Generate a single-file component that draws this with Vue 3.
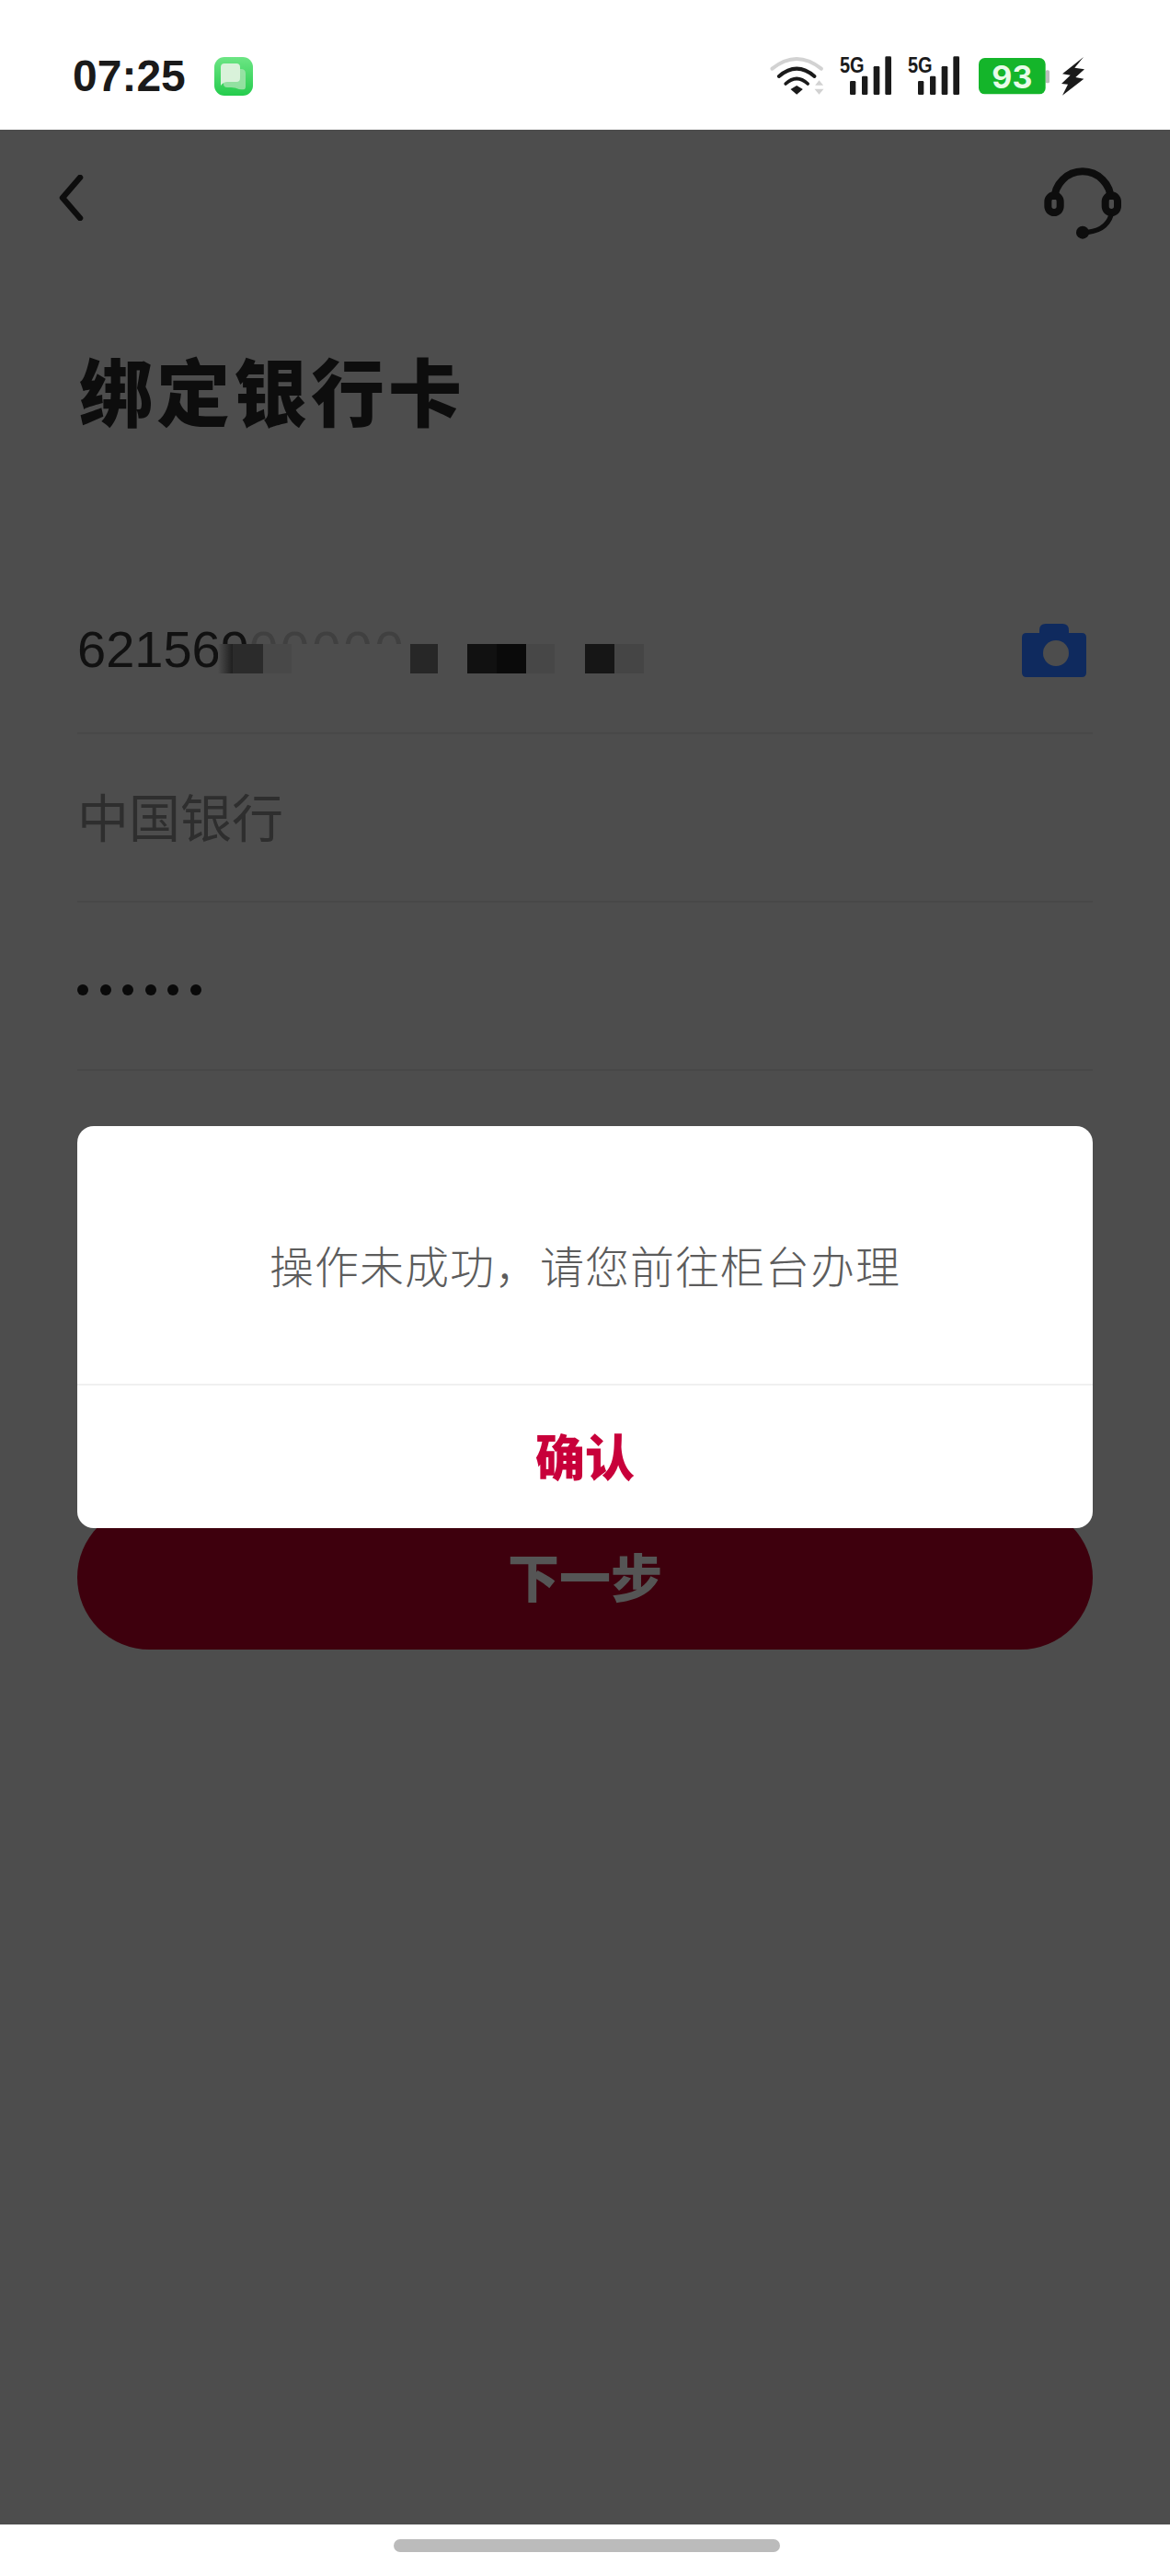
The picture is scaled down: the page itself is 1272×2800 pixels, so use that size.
<script setup>
const mosaic = [
  { w: 16, c: 'linear-gradient(90deg,#4d4d4d,#1f1f1f)' },
  { w: 33, c: '#2b2b2b' },
  { w: 31, c: '#484848' },
  { w: 129, c: '#4d4d4d' },
  { w: 30, c: '#272727' },
  { w: 32, c: '#4d4d4d' },
  { w: 32, c: '#111111' },
  { w: 32, c: '#0a0a0a' },
  { w: 31, c: '#474747' },
  { w: 33, c: '#4d4d4d' },
  { w: 32, c: '#161616' },
  { w: 32, c: '#454545' }
]
const dots = [1, 2, 3, 4, 5, 6]
const signals = [0, 1]
</script>

<template>
  <div class="page">
    <header class="status">
      <div class="status-left">
        <span class="time">07:25</span>
        <svg class="app-icon" width="42" height="42" viewBox="0 0 42 42">
          <defs>
            <linearGradient id="msg" x1="0" y1="0" x2="0" y2="1">
              <stop offset="0" stop-color="#6ce584" />
              <stop offset="1" stop-color="#25cc4d" />
            </linearGradient>
          </defs>
          <rect width="42" height="42" rx="11" fill="url(#msg)" />
          <path d="M19 13h10q5 0 5 5v14q0 2-1 3-5 1-9-1-3-1-6-1h-4q-4 0-4-4V18q0-5 5-5z" fill="#a2e3ad" opacity=".85" />
          <path d="M11 7h13q4 0 4 4v12q0 4-4 4H14q-4 0-7 4V11q0-4 4-4z" fill="#d9f2da" />
        </svg>
      </div>
      <div class="status-right">
        <svg class="wifi" width="62" height="45" viewBox="170 118 185 135">
          <path d="M180 162Q260 98 340 162" fill="none" stroke="#d2d2d2" stroke-width="12" stroke-linecap="round" />
          <path d="M202 187Q260 137 318 187" fill="none" stroke="#1a1a1a" stroke-width="12" stroke-linecap="round" />
          <path d="M224 211Q260 178 296 211" fill="none" stroke="#1a1a1a" stroke-width="11" stroke-linecap="round" />
          <path d="M240 229L260 217L280 229L260 246Z" fill="#1a1a1a" />
          <path d="M320 216L333 200L347 216Z M318 228H348L333 246Z" fill="#d2d2d2" />
        </svg>
        <svg v-for="s in signals" :key="s" class="signal" width="56" height="52" viewBox="0 -30 168 156">
          <text x="0" y="54" font-family="Liberation Sans" font-weight="700" font-size="74" textLength="80" lengthAdjust="spacingAndGlyphs" fill="#1a1a1a">5G</text>
          <rect x="33" y="81" width="19" height="45" rx="4" fill="#1a1a1a" />
          <rect x="72" y="65" width="19" height="61" rx="4" fill="#1a1a1a" />
          <rect x="110" y="33" width="20" height="93" rx="4" fill="#1a1a1a" />
          <rect x="148" y="1" width="20" height="125" rx="4" fill="#1a1a1a" />
        </svg>
        <svg class="battery" width="77" height="40" viewBox="0 0 231 120">
          <rect x="218" y="40" width="13" height="42" rx="5" fill="#bdbdbd" />
          <rect x="0" y="0" width="218" height="118" rx="20" fill="#14b52a" />
          <text x="109" y="98" text-anchor="middle" font-family="Inter" font-weight="700" font-size="102" fill="#e9fbe9">93</text>
        </svg>
        <svg class="bolt" width="26" height="44" viewBox="1122 125 78 130">
          <path d="M1194 127L1125 182L1151 186L1122 214L1143 216L1125 252L1195 198L1168 193L1197 167L1165 162Z" fill="#1a1a1a" />
        </svg>
      </div>
    </header>

    <main class="main">
      <nav class="nav">
        <svg class="back" width="28" height="50" viewBox="0 0 28 50">
          <path d="M24 3L5 25L24 47" fill="none" stroke="#0d0d0d" stroke-width="6.500" stroke-linecap="round" stroke-linejoin="round" />
        </svg>
        <svg class="headset" width="84" height="80" viewBox="1066 479 252 240">
          <path d="M1100 590A92 92 0 0 1 1284 590" fill="none" stroke="#0d0d0d" stroke-width="24" />
          <rect x="1079" y="576" width="40" height="56" rx="20" fill="none" stroke="#0d0d0d" stroke-width="24" />
          <rect x="1266" y="576" width="40" height="56" rx="20" fill="none" stroke="#0d0d0d" stroke-width="24" />
          <path d="M1285 640Q1268 695 1192 697" fill="none" stroke="#0d0d0d" stroke-width="16" />
          <circle cx="1192" cy="697" r="21" fill="#0d0d0d" />
        </svg>
      </nav>

      <h1 class="title">绑定银行卡</h1>

      <section class="form">
        <div class="row row-number">
          <span class="number">621569<span class="tail">00000</span></span>
          <div class="mosaic">
            <span v-for="(m, i) in mosaic" :key="i" class="cell" :style="{ width: m.w + 'px', background: m.c }"></span>
          </div>
          <svg class="camera" width="70" height="58" viewBox="0 0 70 58">
            <path d="M19 10V7q0-7 7-7h18q7 0 7 7v3h14q5 0 5 5v38q0 5-5 5H5q-5 0-5-5V15q0-5 5-5z" fill="#0f2a5e" />
            <circle cx="37" cy="32" r="14" fill="#4d4d4d" />
          </svg>
        </div>
        <div class="row">
          <span class="bank">中国银行</span>
        </div>
        <div class="row row-last">
          <div class="dots">
            <span v-for="d in dots" :key="d" class="dot"></span>
          </div>
        </div>
      </section>

      <button class="next" type="button">下一步</button>
    </main>

    <footer class="home">
      <span class="indicator"></span>
    </footer>

    <div class="dialog">
      <p class="message">操作未成功，请您前往柜台办理</p>
      <div class="confirm">确认</div>
    </div>
  </div>
</template>

<style>
html, body { margin: 0; padding: 0; background: #fff; }
</style>

<style scoped>
.page {
  position: relative;
  width: 1272px;
  height: 2800px;
  display: flex;
  flex-direction: column;
  overflow: hidden;
  font-family: "Liberation Sans", "Noto Sans CJK SC", sans-serif;
}
.status {
  height: 141px;
  flex: none;
  background: #fff;
  display: flex;
  justify-content: space-between;
  padding: 0 92px 0 78px;
  box-sizing: border-box;
}
.status-left { display: flex; align-items: flex-start; padding-top: 62px; gap: 31px; }
.time {
  font-size: 48px;
  font-weight: 700;
  line-height: 42px;
  color: #1a1a1a;
  margin-left: 1px;
}
.app-icon { display: block; }
.status-right { display: flex; align-items: flex-start; padding-top: 60px; }
.wifi { margin-right: 15px; }
.signal { margin-top: -9px; margin-right: 18px; }
.signal + .signal { margin-right: 21px; }
.battery { margin-top: 3px; margin-right: 13px; }
.bolt { margin-top: 1px; }
.main {
  flex: 1;
  background: #4d4d4d;
  padding: 0 84px;
  position: relative;
}
.nav {
  height: 231px;
  margin: 0 -31px 0 -21px;
  display: flex;
  justify-content: space-between;
  align-items: flex-start;
  padding-top: 39px;
  box-sizing: border-box;
}
.back { margin-top: 10px; }
.title {
  margin: 0 0 0 2px;
  height: 100px;
  line-height: 100px;
  font-size: 80px;
  font-weight: 900;
  letter-spacing: 4px;
  color: #0d0d0d;
  font-family: "Noto Sans CJK SC", sans-serif;
}
.form { margin-top: 143px; }
.row {
  position: relative;
  height: 183px;
  box-sizing: border-box;
  border-bottom: 2px solid #484848;
  display: flex;
  align-items: center;
}
.number {
  font-size: 56px;
  line-height: 64px;
  color: #111;
  white-space: nowrap;
}
.tail { color: #404040; letter-spacing: 3px; }
.mosaic {
  position: absolute;
  left: 153px;
  top: 85px;
  height: 32px;
  display: flex;
}
.cell { display: block; height: 100%; flex: none; }
.camera { position: absolute; right: 7px; top: 63px; }
.bank {
  font-size: 56px;
  color: #2e2e2e;
  font-family: "Noto Sans CJK SC", sans-serif;
  font-weight: 400;
  margin-bottom: 6px;
}
.dots { display: flex; gap: 12.5px; margin-top: 8px; }
.dot { width: 12px; height: 12px; border-radius: 50%; background: #0a0a0a; }
.next {
  display: block;
  width: 100%;
  height: 157px;
  margin-top: 472px;
  border: 0;
  border-radius: 79px;
  padding: 0 0 6px;
  background: #3e000d;
  color: #555;
  font-size: 56px;
  font-weight: 900;
  font-family: "Noto Sans CJK SC", sans-serif;
}
.home {
  height: 56px;
  flex: none;
  background: #fff;
  display: flex;
  justify-content: center;
  padding-top: 16px;
  box-sizing: border-box;
  padding-left: 4px;
}
.indicator { width: 420px; height: 14px; border-radius: 7px; background: #bbb; }
.dialog {
  position: absolute;
  left: 84px;
  top: 1224px;
  width: 1104px;
  height: 437px;
  background: #fff;
  border-radius: 18px;
  display: flex;
  flex-direction: column;
  font-family: "Noto Sans CJK SC", sans-serif;
}
.message {
  margin: 0;
  height: 282px;
  box-sizing: border-box;
  border-bottom: 2px solid #f0f0f0;
  display: flex;
  align-items: center;
  justify-content: center;
  font-size: 48px;
  font-weight: 300;
  letter-spacing: 1px;
  color: #5c5c5c;
  padding-top: 20px;
}
.confirm {
  flex: 1;
  display: flex;
  align-items: center;
  justify-content: center;
  font-size: 54px;
  font-weight: 900;
  color: #c8003a;
  padding-bottom: 4px;
}
</style>
